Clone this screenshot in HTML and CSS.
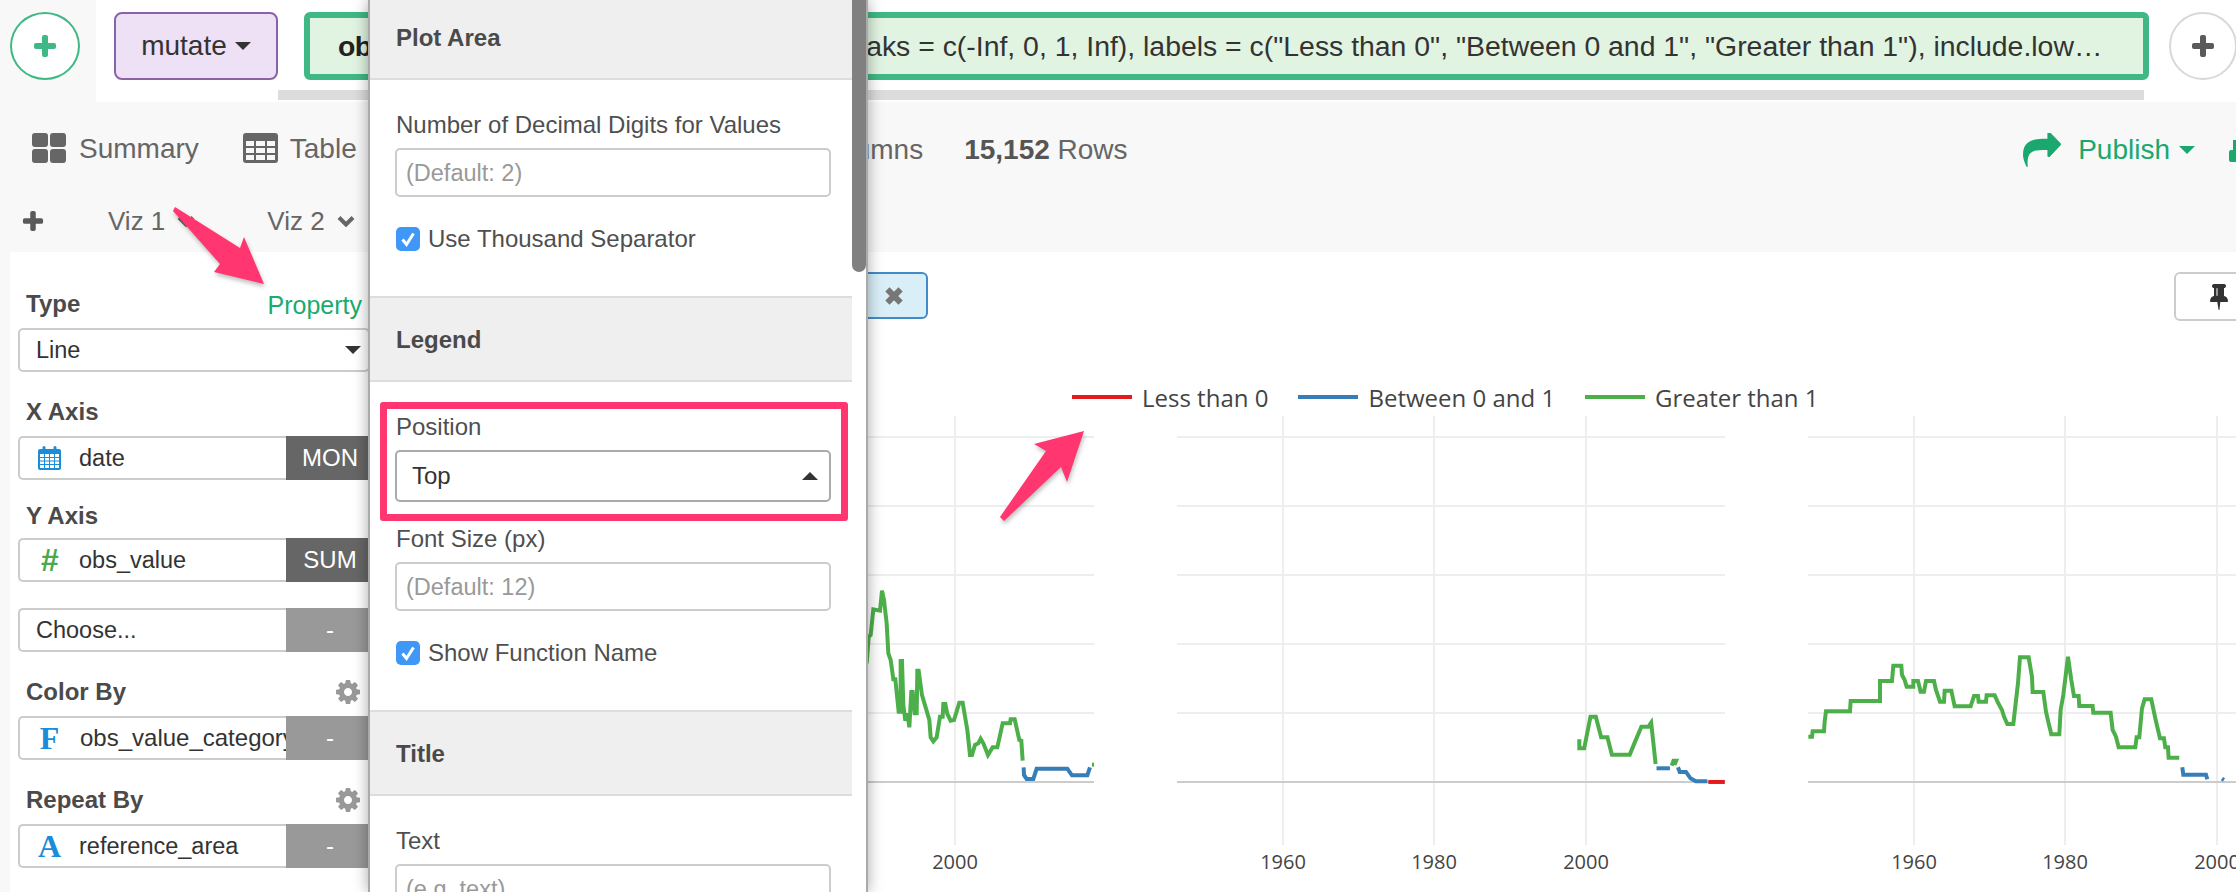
FILE: index.html
```html
<!DOCTYPE html>
<html lang="en">
<head>
<meta charset="utf-8">
<title>Chart property</title>
<link rel="stylesheet" href="styles.css">
</head>
<body>
<header class="topbar">
  <div class="add-zone">
    <button class="circle circle-green"><svg width="24" height="24" viewBox="0 0 24 24"><path class="plus-green" d="M9 3a2 2 0 0 1 2-2h2a2 2 0 0 1 2 2v6h6a2 2 0 0 1 2 2v2a2 2 0 0 1-2 2h-6v6a2 2 0 0 1-2 2h-2a2 2 0 0 1-2-2v-6H3a2 2 0 0 1-2-2v-2a2 2 0 0 1 2-2h6z"/></svg></button>
  </div>
  <div class="pipeline">
    <div class="step-row">
      <div class="step-type">mutate<span class="caret"></span></div>
      <div class="step-code"><b>obs_value_category</b> = cut(obs_value, breaks = c(-Inf, 0, 1, Inf), labels = c("Less than 0", "Between 0 and 1", "Greater than 1"), include.low…</div>
      <button class="circle circle-grey"><svg width="24" height="24" viewBox="0 0 24 24"><path class="plus-grey" d="M9 3a2 2 0 0 1 2-2h2a2 2 0 0 1 2 2v6h6a2 2 0 0 1 2 2v2a2 2 0 0 1-2 2h-6v6a2 2 0 0 1-2 2h-2a2 2 0 0 1-2-2v-6H3a2 2 0 0 1-2-2v-2a2 2 0 0 1 2-2h6z"/></svg></button>
    </div>
    <div class="step-scroll"></div>
  </div>
</header>

<nav class="toolbar">
  <div class="nav-row">
    <div class="nav-item"><svg width="34" height="30" viewBox="0 0 34 30"><rect class="ic-grey" x="0" y="0" width="16" height="14" rx="3"/><rect class="ic-grey" x="18" y="0" width="16" height="14" rx="3"/><rect class="ic-grey" x="0" y="16" width="16" height="14" rx="3"/><rect class="ic-grey" x="18" y="16" width="16" height="14" rx="3"/></svg><span class="nav-text">Summary</span></div>
    <div class="nav-item nav-table"><svg width="35" height="30" viewBox="0 0 35 30"><rect class="ic-grey" width="35" height="30" rx="3"/><path class="ic-white" d="M3 8h8v5H3zM13 8h9v5h-9zM24 8h8v5h-8zM3 15h8v5H3zM13 15h9v5h-9zM24 15h8v5h-8zM3 22h8v5H3zM13 22h9v5h-9zM24 22h8v5h-8z"/></svg><span class="nav-text">Table</span></div>
    <div class="stat stat-cols">20 Columns</div>
    <div class="stat stat-rows"><b>15,152</b> Rows</div>
    <div class="publish">
      <svg width="38" height="34" viewBox="0 0 1792 1536" preserveAspectRatio="none"><path class="ic-green" d="M1792 640q0 26-19 45l-512 512q-19 19-45 19t-45-19-19-45v-256h-224q-98 0-175.5 6t-154 21.5-133 42.5-105.5 69.5-80 101-48.5 138.5-17.5 181q0 55 5 123 0 6 2.5 23.5t2.5 26.5q0 15-8.5 25t-23.5 10q-16 0-28-17-7-9-13-22t-13.5-30-10.5-24q-127-285-127-451 0-199 53-333 162-403 875-403h224v-256q0-26 19-45t45-19 45 19l512 512q19 19 19 45z" transform="translate(0,-128)"/></svg>
      <span>Publish</span><span class="caret caret-green"></span>
      <svg class="cut-icon" width="10" height="22" viewBox="0 0 10 22"><path class="ic-green" d="M4 0h6v22H2a2 2 0 0 1-2-2v-8a2 2 0 0 1 2-2h2z"/></svg>
    </div>
  </div>
  <div class="tab-row">
    <svg width="22" height="22" viewBox="0 0 24 24"><path class="plus-dark" d="M9 3a2 2 0 0 1 2-2h2a2 2 0 0 1 2 2v6h6a2 2 0 0 1 2 2v2a2 2 0 0 1-2 2h-6v6a2 2 0 0 1-2 2h-2a2 2 0 0 1-2-2v-6H3a2 2 0 0 1-2-2v-2a2 2 0 0 1 2-2h6z"/></svg>
    <div class="viz-tab viz-one">Viz 1<svg width="18" height="12" viewBox="0 0 18 12"><path class="chev" d="M2 2.500l7 7 7-7"/></svg></div>
    <div class="viz-tab viz-two">Viz 2<svg width="18" height="12" viewBox="0 0 18 12"><path class="chev" d="M2 2.500l7 7 7-7"/></svg></div>
  </div>
</nav>

<div class="content">
  <aside class="sidebar">
    <div class="group group-first">
      <div class="label-row"><span class="side-label">Type</span><span class="property">Property</span></div>
      <div class="select-line">Line<span class="caret caret-dark"></span></div>
    </div>
    <div class="group">
      <div class="label-row"><span class="side-label">X Axis</span></div>
      <div class="field"><span class="field-icon"><svg width="23" height="24" viewBox="0 0 23 24"><rect class="cal" x="0" y="3" width="23" height="21" rx="2"/><rect class="cal-hole" x="2" y="8" width="19" height="14"/><path class="cal-grid" d="M6.500 8v14M11.500 8v14M16.500 8v14M2 11.500h19M2 15h19M2 18.500h19"/><rect class="cal" x="4.500" y="0" width="3" height="6" rx="1.500"/><rect class="cal" x="15.500" y="0" width="3" height="6" rx="1.500"/></svg></span><span class="field-name">date</span><span class="field-tag">MON</span></div>
    </div>
    <div class="group group-tight">
      <div class="label-row"><span class="side-label">Y Axis</span></div>
      <div class="field"><span class="field-icon icon-hash">#</span><span class="field-name">obs_value</span><span class="field-tag">SUM</span></div>
    </div>
    <div class="group group-plain">
      <div class="field"><span class="field-name field-choose">Choose...</span><span class="field-tag tag-empty">-</span></div>
    </div>
    <div class="group">
      <div class="label-row"><span class="side-label">Color By</span><svg class="gear" width="24" height="24" viewBox="0 0 1536 1536"><path d="M1024 768q0-106-75-181t-181-75-181 75-75 181 75 181 181 75 181-75 75-181zm512-109v222q0 12-8 23t-20 13l-185 28q-19 54-39 91 35 50 107 138 10 12 10 25t-9 23q-27 37-99 108t-94 71q-12 0-26-9l-138-108q-44 23-91 38-16 136-29 186-7 28-36 28h-222q-14 0-24.500-8.500t-11.500-21.500l-28-184q-49-16-90-37l-141 107q-10 9-25 9-14 0-25-11-126-114-165-168-7-10-7-23 0-12 8-23 15-21 51-66.500t54-70.500q-27-50-41-99l-183-27q-13-2-21-12.500t-8-23.500v-222q0-12 8-23t19-13l186-28q14-46 39-92-40-57-107-138-10-12-10-24 0-10 9-23 26-36 98.500-107.500t94.500-71.500q13 0 26 10l138 107q44-23 91-38 16-136 29-186 7-28 36-28h222q14 0 24.500 8.500t11.500 21.500l28 184q49 16 90 37l142-107q9-9 24-9 13 0 25 10 129 119 165 170 7 8 7 22 0 12-8 23-15 21-51 66.500t-54 70.500q26 50 41 98l183 28q13 2 21 12.500t8 23.500z"/></svg></div>
      <div class="field"><span class="field-icon icon-serif">F</span><span class="field-name name-long">obs_value_category</span><span class="field-tag tag-empty">-</span></div>
    </div>
    <div class="group">
      <div class="label-row"><span class="side-label">Repeat By</span><svg class="gear" width="24" height="24" viewBox="0 0 1536 1536"><path d="M1024 768q0-106-75-181t-181-75-181 75-75 181 75 181 181 75 181-75 75-181zm512-109v222q0 12-8 23t-20 13l-185 28q-19 54-39 91 35 50 107 138 10 12 10 25t-9 23q-27 37-99 108t-94 71q-12 0-26-9l-138-108q-44 23-91 38-16 136-29 186-7 28-36 28h-222q-14 0-24.500-8.500t-11.500-21.500l-28-184q-49-16-90-37l-141 107q-10 9-25 9-14 0-25-11-126-114-165-168-7-10-7-23 0-12 8-23 15-21 51-66.500t54-70.500q-27-50-41-99l-183-27q-13-2-21-12.500t-8-23.500v-222q0-12 8-23t19-13l186-28q14-46 39-92-40-57-107-138-10-12-10-24 0-10 9-23 26-36 98.500-107.500t94.500-71.500q13 0 26 10l138 107q44-23 91-38 16-136 29-186 7-28 36-28h222q14 0 24.500 8.500t11.500 21.500l28 184q49 16 90 37l142-107q9-9 24-9 13 0 25 10 129 119 165 170 7 8 7 22 0 12-8 23-15 21-51 66.500t-54 70.500q26 50 41 98l183 28q13 2 21 12.500t8 23.500z"/></svg></div>
      <div class="field"><span class="field-icon icon-serif">A</span><span class="field-name">reference_area</span><span class="field-tag tag-empty">-</span></div>
    </div>
  </aside>

  <main class="main">
    <div class="chart-head">
      <div class="chip"><svg width="22" height="22" viewBox="0 0 20 20"><path class="chip-x" d="M4 4l12 12M16 4L4 16"/></svg></div>
      <button class="pin"><svg width="18" height="26" viewBox="0 128 1152 1664"><path d="M480 864v-448q0-14-9-23t-23-9-23 9-9 23v448q0 14 9 23t23 9 23-9 9-23zm672 352q0 26-19 45t-45 19h-429l-51 483q-2 12-10.500 20.500t-20.500 8.500h-1q-27 0-32-27l-76-485h-404q-26 0-45-19t-19-45q0-123 78.500-221.500t177.500-98.500v-512q-52 0-90-38t-38-90 38-90 90-38h640q52 0 90 38t38 90-38 90-90 38v512q99 0 177.500 98.500t78.500 221.500z"/></svg></button>
    </div>
    <div class="legend">
      <div class="legend-item"><i class="swatch swatch-red"></i>Less than 0</div>
      <div class="legend-item"><i class="swatch swatch-blue"></i>Between 0 and 1</div>
      <div class="legend-item"><i class="swatch swatch-green"></i>Greater than 1</div>
    </div>
    <div class="charts">
      <svg class="panel" width="548" height="470" viewBox="0 0 548 470">
        <path class="grid" d="M0 21h548M0 90h548M0 159h548M0 228h548M0 297h548M106 0v429M257 0v429M409 0v429"/>
        <path class="zero" d="M0 366h548"/>
        <g transform="translate(314,164) scale(.3333)">
          <polyline class="s-green" points="20,250 26,170 32,165 40,88 60,92 66,32 72,60 80,130 85,220 92,240 100,298 106,298 116,395 122,395 122,243 126,243 130,375 136,422 142,400 148,442 154,336 158,336 164,400 170,400 172,272 176,272 186,345 208,420 212,472 220,484 230,472 240,410 248,410 250,372 256,372 262,402 272,422 282,420 298,368 308,368 322,450 330,525 336,525 345,495 355,490 362,476 370,490 384,525 398,502 412,502 428,430 450,430 452,418 464,418 478,480 484,482 488,542"/>
          <polyline class="s-blue" points="491,562 492,585 500,597 520,597 530,566 622,566 636,586 682,586 690,562"/>
          <polyline class="s-green" points="696,554 702,554"/>
        </g>
        <text class="tick" x="106" y="453">1960</text><text class="tick" x="257" y="453">1980</text><text class="tick" x="409" y="453">2000</text>
      </svg>
      <svg class="panel" width="548" height="470" viewBox="0 0 548 470">
        <path class="grid" d="M0 21h548M0 90h548M0 159h548M0 228h548M0 297h548M106 0v429M257 0v429M409 0v429"/>
        <path class="zero" d="M0 366h548"/>
        <g transform="translate(359,-36) scale(.4464,.3333)">
          <polyline class="s-green" points="97,1078 97,1105 108,1105 122,1010 134,1010 146,1072 160,1072 170,1124 210,1124 222,1085 236,1040 252,1040 258,1028 268,1152"/>
          <polyline class="s-blue" points="270,1165 300,1165"/>
          <polyline class="s-green" points="304,1157 308,1142 314,1142 310,1155"/>
          <polyline class="s-blue" points="318,1162 322,1176 336,1176 346,1195 358,1204 384,1204"/>
          <polyline class="s-red" points="386,1206 423,1206"/>
        </g>
        <text class="tick" x="106" y="453">1960</text><text class="tick" x="257" y="453">1980</text><text class="tick" x="409" y="453">2000</text>
      </svg>
      <svg class="panel" width="548" height="470" viewBox="0 0 548 470">
        <path class="grid" d="M0 21h548M0 90h548M0 159h548M0 228h548M0 297h548M106 0v429M257 0v429M409 0v429"/>
        <path class="zero" d="M0 366h548"/>
        <g transform="translate(-8,224) scale(.3333)">
          <polyline class="s-green" points="25,290 36,290 38,274 72,274 74,245 78,214 150,214 152,183 240,183 240,123 276,123 280,77 304,77 306,105 314,120 320,140 340,140 340,123 354,123 362,155 372,155 378,123 402,123 408,150 420,185 432,185 434,152 454,152 464,199 512,199 522,168 534,168 536,185 558,185 560,166 584,166 594,188 606,210 612,230 622,252 640,252 654,130 660,52 686,52 696,110 698,156 730,156 738,215 746,250 754,283 778,283 782,210 790,165 804,50 814,120 822,168 836,168 838,198 878,198 880,218 932,218 938,270 948,290 956,322 1006,322 1010,292 1018,292 1026,205 1034,178 1054,178 1066,235 1080,295 1092,295 1096,322 1104,322 1106,353 1138,353"/>
          <polyline class="s-blue" points="1147,382 1150,404 1218,404 1222,418"/>
          <polyline class="s-blue" points="1266,416 1272,420"/>
        </g>
        <text class="tick" x="106" y="453">1960</text><text class="tick" x="257" y="453">1980</text><text class="tick" x="409" y="453">2000</text>
      </svg>
    </div>
  </main>
</div>

<section class="popover">
  <div class="pop-scroll">
    <h3 class="pop-head pop-head-first">Plot Area</h3>
    <div class="pop-body">
      <label class="pop-label">Number of Decimal Digits for Values</label>
      <div class="pop-input">(Default: 2)</div>
      <div class="check-row"><span class="check"><svg width="24" height="24" viewBox="0 0 24 24"><path d="M6.500 12.500l4 5 7-11"/></svg></span>Use Thousand Separator</div>
    </div>
    <h3 class="pop-head">Legend</h3>
    <div class="pop-body pop-body-legend">
      <div class="highlight">
        <label class="pop-label">Position</label>
        <div class="pop-select">Top<span class="caret-up"></span></div>
      </div>
      <label class="pop-label pop-label-after">Font Size (px)</label>
      <div class="pop-input">(Default: 12)</div>
      <div class="check-row"><span class="check"><svg width="24" height="24" viewBox="0 0 24 24"><path d="M6.500 12.500l4 5 7-11"/></svg></span>Show Function Name</div>
    </div>
    <h3 class="pop-head">Title</h3>
    <div class="pop-body">
      <label class="pop-label">Text</label>
      <div class="pop-input">(e.g. text)</div>
    </div>
  </div>
  <div class="pop-thumb"></div>
</section>

<svg class="arrow arrow-one" width="110" height="100" viewBox="0 0 110 100"><path d="M5 4L70 45 74 34 94 81 44 69 50 61 3 8z"/></svg>
<svg class="arrow arrow-two" width="110" height="110" viewBox="0 0 110 110"><path d="M10 92L56 26 44 19 94 6 77 57 71 42 14 96z"/></svg>
</body>
</html>
```

FILE: styles.css
```css
* { box-sizing: border-box; }
html, body { margin: 0; padding: 0; }
body {
  position: relative;
  width: 2236px;
  height: 892px;
  overflow: hidden;
  background: #f8f8f8;
  font-family: "Liberation Sans", Arial, sans-serif;
  color: #333;
}
button { padding: 0; font: inherit; }

/* top bar */
.topbar { display: flex; height: 102px; }
.add-zone { width: 96px; padding: 12px 0 0 10px; flex-shrink: 0; }
.circle {
  display: flex; align-items: center; justify-content: center;
  width: 70px; height: 68px; border-radius: 50%;
  background: #fff; flex-shrink: 0;
}
.circle-green { border: 2px solid #3fb885; }
.circle-grey { width: 68px; margin-left: 20px; border: 2px solid #d8d8d8; }
.plus-green { fill: #3fb885; }
.plus-grey, .plus-dark { fill: #5a5a5a; }
.pipeline { flex: 1; min-width: 0; background: #fff; overflow: hidden; }
.step-row { display: flex; height: 68px; margin-top: 12px; padding-left: 18px; }
.step-type {
  display: flex; align-items: center; justify-content: center;
  width: 164px; flex-shrink: 0;
  background: #eee0f5; border: 2px solid #8a62a8; border-radius: 8px;
  font-size: 28px; color: #333;
}
.step-code {
  width: 1845px; flex-shrink: 0; margin-left: 26px; padding-left: 28px;
  background: #e1f3e1; border: 6px solid #3fb885; border-radius: 6px;
  font-size: 28.400px; line-height: 57px; color: #333; white-space: nowrap; overflow: hidden;
}
.step-code b { color: #222; letter-spacing: -.6px; }
.step-scroll { width: 1866px; height: 10px; margin: 10px 0 0 182px; background: #dcdcdc; }

.caret {
  display: inline-block; margin-left: 8px; width: 0; height: 0;
  border-left: 8px solid transparent; border-right: 8px solid transparent;
  border-top: 8px solid #333;
}
.caret-green { margin-left: 9px; border-top-color: #1aa86e; }
.caret-dark { margin-left: auto; border-top-color: #333; }

/* toolbar */
.toolbar { height: 150px; }
.nav-row { display: flex; align-items: center; height: 92px; padding-left: 32px; font-size: 28px; color: #666; }
.nav-item { display: flex; align-items: center; gap: 13px; }
.nav-table { margin-left: 44px; gap: 12px; }
.nav-text { padding-top: 2px; }
.ic-grey { fill: #666; }
.ic-white { fill: #f8f8f8; }
.ic-green { fill: #1aa86e; }
.stat { margin-top: 4px; }
.stat-cols { margin-left: 417px; }
.stat-rows { margin-left: 41px; }
.stat b { color: #555; }
.publish { display: flex; align-items: center; margin: 4px 0 0 auto; color: #1aa86e; }
.publish span:first-of-type { margin-left: 17px; }
.cut-icon { margin: 2px -3px 0 34px; flex-shrink: 0; }
.tab-row { display: flex; align-items: center; height: 54px; padding-left: 22px; font-size: 26px; color: #666; }
.viz-tab { display: flex; align-items: center; gap: 12px; }
.viz-one { margin-left: 64px; }
.viz-two { margin-left: 72px; }
.chev { fill: none; stroke: #666; stroke-width: 4; }

/* content */
.content { display: flex; height: 640px; }
.sidebar { width: 360px; margin-left: 10px; padding: 37px 0 0 8px; background: #fff; flex-shrink: 0; overflow: hidden; }
.group { margin-top: 25px; }
.group-first { margin-top: 0; }
.group-tight { margin-top: 21px; }
.group-tight .label-row { margin-bottom: 7px; }
.group-plain { margin-top: 26px; }
.label-row { display: flex; align-items: center; justify-content: space-between; height: 30px; margin-bottom: 9px; padding: 0 10px 0 8px; }
.side-label { font-size: 24px; font-weight: bold; color: #4a4a4a; }
.property { margin-right: -2px; padding-top: 3px; font-size: 25px; color: #1aab6f; }
.gear { fill: #999; }
.select-line {
  display: flex; align-items: center; width: 352px; height: 44px; padding: 0 7px 0 16px;
  border: 2px solid #ccc; border-radius: 5px; background: #fff; font-size: 23.500px;
}
.field { display: flex; align-items: stretch; width: 352px; height: 44px; font-size: 23.500px; }
.field-icon {
  display: flex; align-items: center; justify-content: center;
  width: 61px; flex-shrink: 0;
  border: 2px solid #ccc; border-right: 0; border-radius: 5px 0 0 5px;
}
.icon-hash { font-size: 32px; font-weight: bold; font-style: italic; color: #47a84c; }
.icon-serif { font-family: "Liberation Serif", serif; font-size: 32px; font-weight: bold; color: #1a8cd8; }
.cal { fill: #1a8cd8; }
.cal-hole { fill: #fff; }
.cal-grid { fill: none; stroke: #1a8cd8; stroke-width: 1; }
.field-name {
  flex: 1; min-width: 0; display: flex; align-items: center; overflow: hidden; white-space: nowrap;
  border: 2px solid #ccc; border-left: 0; border-right: 0; color: #333;
}
.name-long { padding-left: 1px; font-size: 24px; }
.field-choose { padding-left: 16px; border-left: 2px solid #ccc; border-radius: 5px 0 0 5px; }
.field-tag { display: flex; align-items: center; justify-content: center; width: 84px; padding-left: 4px; flex-shrink: 0; background: #666; color: #fff; font-size: 24px; }
.tag-empty { background: #999; }

/* chart area */
.main { flex: 1; min-width: 0; background: #fff; overflow: hidden; }
.chart-head { display: flex; align-items: flex-start; justify-content: space-between; padding-top: 20px; }
.chip {
  display: flex; align-items: center; justify-content: flex-end;
  width: 238px; height: 47px; margin-left: 320px; padding-right: 21px;
  background: #d9eef7; border: 2px solid #428bca; border-radius: 6px;
}
.chip-x { fill: none; stroke: #777; stroke-width: 5.500; }
.pin {
  display: flex; justify-content: flex-start; align-items: center;
  width: 80px; height: 49px; margin-right: -18px; padding-left: 34px;
  background: #fff; border: 2px solid #ccc; border-radius: 6px; flex-shrink: 0;
}
.pin svg { fill: #333; }
.legend { display: flex; gap: 30px; height: 34px; margin: 59px 0 0 702px; font-family: "Open Sans", sans-serif; font-size: 24px; color: #444; }
.legend-item { display: flex; align-items: center; white-space: nowrap; }
.swatch { width: 60px; height: 4px; margin-right: 10px; }
.swatch-red { background: #e41a1c; }
.swatch-blue { background: #377eb8; }
.swatch-green { background: #4daf4a; }
.charts { display: flex; gap: 83px; margin-top: 2px; padding-left: 176px; }
.panel { flex-shrink: 0; }
.grid { fill: none; stroke: #eee; stroke-width: 2; }
.zero { fill: none; stroke: #ccc; stroke-width: 2; }
.s-green, .s-blue, .s-red { fill: none; stroke-width: 4px; vector-effect: non-scaling-stroke; }
.s-green { stroke: #4daf4a; }
.s-blue { stroke: #377eb8; }
.s-red { stroke: #e41a1c; stroke-width: 4px; }
.tick { font-family: "Open Sans", sans-serif; font-size: 20px; fill: #444; text-anchor: middle; }

/* popover */
.popover {
  position: absolute; left: 368px; top: 0; width: 500px; height: 892px;
  background: #fff; border: solid #aaa; border-width: 0 2px;
  box-shadow: 0 0 14px rgba(0,0,0,.35);
  overflow: hidden;
}
.pop-scroll { width: 482px; }
.pop-head {
  display: flex; align-items: center; height: 86px; margin: 0; padding: 2px 0 0 26px;
  background: #efefef; border: solid #ddd; border-width: 2px 0;
  font-size: 24px; font-weight: bold; color: #4a4a4a;
}
.pop-head-first { height: 80px; padding: 0 0 2px 26px; border-top: 0; }
.pop-body { padding: 29px 21px 46px 25px; }
.pop-body-legend { padding-top: 20px; }
.pop-label { display: block; height: 30px; margin: 0 0 9px 1px; font-size: 24px; line-height: 32px; color: #4f4f4f; }
.pop-label-after { margin-top: 2px; }
.pop-input {
  height: 49px; padding-left: 9px;
  border: 2px solid #ccc; border-radius: 5px;
  font-size: 23.500px; line-height: 47px; color: #999;
}
.check-row { display: flex; align-items: center; gap: 8px; height: 24px; margin: 29px 0 0 1px; padding-top: 1px; font-size: 24px; color: #4f4f4f; }
.check { width: 24px; height: 24px; border-radius: 5px; background: #3f98f8; flex-shrink: 0; }
.check svg { display: block; }
.check path { fill: none; stroke: #fff; stroke-width: 3; }
.highlight { margin: 0 -17px 0 -15px; padding: 2px 10px 12px 8px; border: 7px solid #ff3670; border-radius: 3px; }
.pop-select {
  display: flex; align-items: center; justify-content: space-between;
  height: 52px; padding: 0 11px 0 15px;
  border: 2px solid #aaa; border-radius: 5px; font-size: 24px; color: #333;
}
.caret-up { width: 0; height: 0; border-left: 8px solid transparent; border-right: 8px solid transparent; border-bottom: 8px solid #333; }
.pop-thumb { position: absolute; right: 0; top: 0; width: 14px; height: 272px; background: #808080; border-radius: 0 0 7px 7px; }

/* annotation arrows */
.arrow { position: absolute; fill: #ff3670; filter: drop-shadow(1px 3px 2px rgba(0,0,0,.25)); }
.arrow-one { left: 170px; top: 203px; }
.arrow-two { left: 990px; top: 425px; }
```
